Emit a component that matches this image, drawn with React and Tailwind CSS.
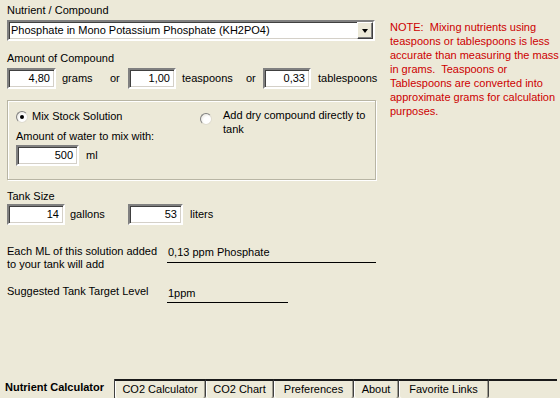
import React from "react";

const sunken =
  "border-2 border-t-[#808080] border-l-[#808080] border-b-white border-r-white shadow-[inset_1px_1px_0_#404040,inset_-1px_-1px_0_#d4d0c8] bg-white";

function Input({ value, w }) {
  return (
    <div className={`${sunken} ${w} h-[21px] flex items-center justify-end pr-[4px] leading-[13px]`}>
      {value}
    </div>
  );
}

function Radio({ checked }) {
  return (
    <div className="w-[12px] h-[12px] rounded-full border border-t-[#808080] border-l-[#808080] border-b-[#e0ddd0] border-r-[#e0ddd0] bg-[radial-gradient(circle_at_65%_65%,#ffffff_40%,#dcdad0_100%)] flex items-center justify-center shrink-0">
      {checked && <div className="w-[4px] h-[4px] rounded-full bg-black" />}
    </div>
  );
}

function Tab({ label, w }) {
  return (
    <div
      className={`${w} h-[19px] border-t-2 border-t-[#1a1a1a] border-r border-r-[#404040] shadow-[inset_1px_0_0_#ffffff,inset_-1px_0_0_#a09d90] flex justify-center pt-[2px] leading-[13px] rounded-b-[2px]`}
    >
      {label}
    </div>
  );
}

export default function App() {
  return (
    <div className="w-[560px] h-[398px] bg-[#ECE9D8] flex flex-col overflow-hidden font-['Liberation_Sans',Arial,sans-serif] text-[11px] text-black">
      <div className="flex-1 flex">
        {/* left column */}
        <div className="w-[390px] pl-[7px] pt-[4px] flex flex-col">
          <div className="leading-[13px]">Nutrient / Compound</div>
          <div className={`${sunken} mt-[3px] h-[21px] w-[368px] flex items-center justify-between pl-[2px] pr-[0px]`}>
            <span className="leading-[13px]">Phosphate in Mono Potassium Phosphate (KH2PO4)</span>
            <div className="w-[16px] h-[17px] bg-[#ECE9D8] border border-t-white border-l-white border-b-[#404040] border-r-[#404040] shadow-[inset_-1px_-1px_0_#808080] flex items-center justify-center">
              <div className="w-0 h-0 border-l-[3.5px] border-r-[3.5px] border-t-[4px] border-l-transparent border-r-transparent border-t-black" />
            </div>
          </div>

          <div className="mt-[11px] leading-[13px]">Amount of Compound</div>
          <div className="mt-[3px] flex items-center leading-[13px]">
            <Input value="4,80" w="w-[49px]" />
            <span className="ml-[6px] w-[48px]">grams</span>
            <span className="w-[18px]">or</span>
            <Input value="1,00" w="w-[48px]" />
            <span className="ml-[6px] w-[64px]">teaspoons</span>
            <span className="w-[17px]">or</span>
            <Input value="0,33" w="w-[48px]" />
            <span className="ml-[7px]">tablespoons</span>
          </div>

          {/* group box */}
          <div className="mt-[11px] w-[369px] h-[80px] border border-[#b8b5a4] shadow-[inset_1px_1px_0_#ffffff,1px_1px_0_#ffffff] flex flex-col pl-[8px]">
            <div className="flex items-start">
              <div className="w-[184px] flex items-center pt-[9px]">
                <Radio checked />
                <span className="ml-[4px] leading-[13px]">Mix Stock Solution</span>
              </div>
              <div className="flex items-start pt-[7px]">
                <div className="mt-[5px]">
                  <Radio />
                </div>
                <span className="ml-[11px] leading-[14px] w-[150px]">Add dry compound directly to tank</span>
              </div>
            </div>
            <div className="mt-[-6px] leading-[13px]">Amount of water to mix with:</div>
            <div className="mt-[2px] flex items-center leading-[13px]">
              <Input value="500" w="w-[63px]" />
              <span className="ml-[7px]">ml</span>
            </div>
          </div>

          <div className="mt-[10px] leading-[13px]">Tank Size</div>
          <div className="mt-[1px] flex items-center leading-[13px]">
            <Input value="14" w="w-[58px]" />
            <span className="ml-[5px] w-[58px]">gallons</span>
            <Input value="53" w="w-[55px]" />
            <span className="ml-[7px]">liters</span>
          </div>

          <div className="mt-[20px] flex items-start">
            <div className="w-[160px] leading-[13px]">
              Each ML of this solution added
              <br />
              to your tank will add
            </div>
            <div className="mt-[1px] w-[209px] leading-[13px] pb-[3px] pl-[1px] border-b border-black">
              0,13 ppm Phosphate
            </div>
          </div>

          <div className="mt-[14px] flex items-start">
            <div className="w-[160px] leading-[13px]">Suggested Tank Target Level</div>
            <div className="mt-[2px] w-[121px] leading-[13px] pb-[2px] pl-[1px] border-b border-black">
              1ppm
            </div>
          </div>
        </div>

        {/* note */}
        <div className="pt-[20px] leading-[14px] text-[#cc0000] whitespace-pre">
          {"NOTE:  Mixing nutrients using\nteaspoons or tablespoons is less\naccurate than measuring the mass\nin grams.  Teaspoons or\nTablespoons are converted into\napproximate grams for calculation\npurposes."}
        </div>
      </div>

      {/* tabs */}
      <div className="h-[19px] flex">
        <div className="w-[114px] pl-[5px] pt-[2px] leading-[13px] font-bold">Nutrient Calculator</div>
        <div className="h-[19px] border-l border-l-[#404040]" />
        <Tab label="CO2 Calculator" w="w-[91px]" />
        <Tab label="CO2 Chart" w="w-[68px]" />
        <Tab label="Preferences" w="w-[80px]" />
        <Tab label="About" w="w-[45px]" />
        <Tab label="Favorite Links" w="w-[90px]" />
        <div className="flex-1 border-t-2 border-t-[#1a1a1a] mr-[3px]" />
      </div>
    </div>
  );
}
